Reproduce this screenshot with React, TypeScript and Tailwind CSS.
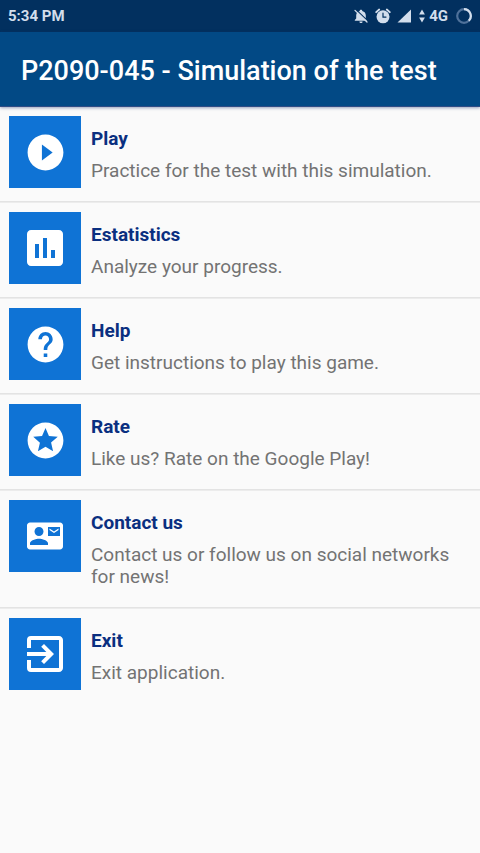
import React from "react";
import type { IconType } from "react-icons";
import {
  MdAssessment,
  MdContactMail,
  MdExitToApp,
  MdHelp,
  MdPlayCircleFilled,
  MdStars,
} from "react-icons/md";

type MenuItem = {
  title: string;
  description: string;
  icon: IconType;
  iconClass: string;
};

const menuItems: MenuItem[] = [
  {
    title: "Play",
    description: "Practice for the test with this simulation.",
    icon: MdPlayCircleFilled,
    iconClass: "size-[43px]",
  },
  {
    title: "Estatistics",
    description: "Analyze your progress.",
    icon: MdAssessment,
    iconClass: "size-12",
  },
  {
    title: "Help",
    description: "Get instructions to play this game.",
    icon: MdHelp,
    iconClass: "size-[43px]",
  },
  {
    title: "Rate",
    description: "Like us? Rate on the Google Play!",
    icon: MdStars,
    iconClass: "size-[43px]",
  },
  {
    title: "Contact us",
    description: "Contact us or follow us on social networks for news!",
    icon: MdContactMail,
    iconClass: "size-9",
  },
  {
    title: "Exit",
    description: "Exit application.",
    icon: MdExitToApp,
    iconClass: "size-12",
  },
];

const BellOffIcon = () => (
  <svg viewBox="0 0 16 16" className="size-4" aria-hidden="true">
    <path
      d="M8 1.8c.8 0 1.3.5 1.3 1.2 2.2.6 3.5 2.2 3.5 4.6v2.8l1.4 1.7v.7H1.8v-.7l1.4-1.7V7.6c0-2.4 1.3-4 3.5-4.6 0-.7.5-1.2 1.3-1.2zM6.4 13.4h3.2c0 .9-.7 1.6-1.6 1.6s-1.6-.7-1.6-1.6z"
      fill="currentColor"
    />
    <path d="M3 1.6 15.4 13.4" stroke="#02305f" strokeWidth="1.2" />
    <path
      d="M2 2.4 14 14"
      stroke="currentColor"
      strokeWidth="1.3"
      strokeLinecap="round"
    />
  </svg>
);

const AlarmIcon = () => (
  <svg viewBox="0 0 16 16" className="size-4" aria-hidden="true">
    <path
      d="M1.2 4.2 4.2 1.5M14.8 4.2 11.8 1.5"
      stroke="currentColor"
      strokeWidth="1.8"
      strokeLinecap="round"
    />
    <circle cx="8" cy="8.8" r="6.5" fill="currentColor" />
    <path
      d="M8 5.2v3.9h3"
      fill="none"
      stroke="#02305f"
      strokeWidth="1.2"
      strokeLinecap="round"
    />
  </svg>
);

const SignalIcon = () => (
  <svg viewBox="0 0 14 14" className="size-3.5" aria-hidden="true">
    <path d="M14 0.5v13H0.5z" fill="currentColor" />
  </svg>
);

const DataArrowsIcon = () => (
  <svg viewBox="0 0 6 14" className="h-3.5 w-1.5" aria-hidden="true">
    <path d="M3 0.6 5.9 5.6H0.1zM3 13.4 0.1 8.4h5.8z" fill="currentColor" />
  </svg>
);

const BatteryRing = () => (
  <svg viewBox="0 0 16 16" className="size-4" aria-hidden="true">
    <circle
      cx="8"
      cy="8"
      r="6.8"
      fill="none"
      stroke="#4f719a"
      strokeWidth="2.2"
    />
    <path
      d="M8 1.2A6.8 6.8 0 0 1 12.8 12.8"
      fill="none"
      stroke="currentColor"
      strokeWidth="2.2"
    />
  </svg>
);

const StatusBar = () => (
  <div className="flex h-8 items-center justify-between bg-[#02305f] px-2 text-[15px] font-bold text-[#d3deec]">
    <span>5:34 PM</span>
    <div className="flex items-center gap-2">
      <div className="flex items-center gap-1.5">
        <BellOffIcon />
        <AlarmIcon />
        <SignalIcon />
      </div>
      <div className="flex items-center gap-1">
        <DataArrowsIcon />
        <span>4G</span>
      </div>
      <BatteryRing />
    </div>
  </div>
);

const MenuRow = ({ item }: { item: MenuItem }) => {
  const Icon = item.icon;

  return (
    <button type="button" className="flex w-full items-start gap-2.5 text-left">
      <span className="mt-2.5 flex size-[72px] shrink-0 items-center justify-center bg-[#0f73d5] text-white">
        <Icon className={item.iconClass} />
      </span>
      <span className="flex flex-col gap-2.5 pt-[22px] pr-2 pb-5 text-[19px] leading-[22px]">
        <span className="font-bold text-[#0a2f80]">{item.title}</span>
        <span className="text-[#737373]">{item.description}</span>
      </span>
    </button>
  );
};

export default function App() {
  return (
    <div className="min-h-screen bg-[#fafafa] font-['Roboto',sans-serif]">
      <StatusBar />
      <header className="relative -mb-px flex h-[75px] items-center border-b border-[#2f4c86] bg-[#024985] px-[21px] pt-1 shadow-[0_1px_3px_rgba(30,50,110,0.45)]">
        <h1 className="text-[27px] font-medium text-white">
          P2090-045 - Simulation of the test
        </h1>
      </header>
      <main>
        <ul>
          {menuItems.map((item) => (
            <li
              key={item.title}
              className="px-[9px] shadow-[0_1px_0_#ececec,inset_0_-1px_0_#e3e3e3] last:shadow-none"
            >
              <MenuRow item={item} />
            </li>
          ))}
        </ul>
      </main>
    </div>
  );
}
